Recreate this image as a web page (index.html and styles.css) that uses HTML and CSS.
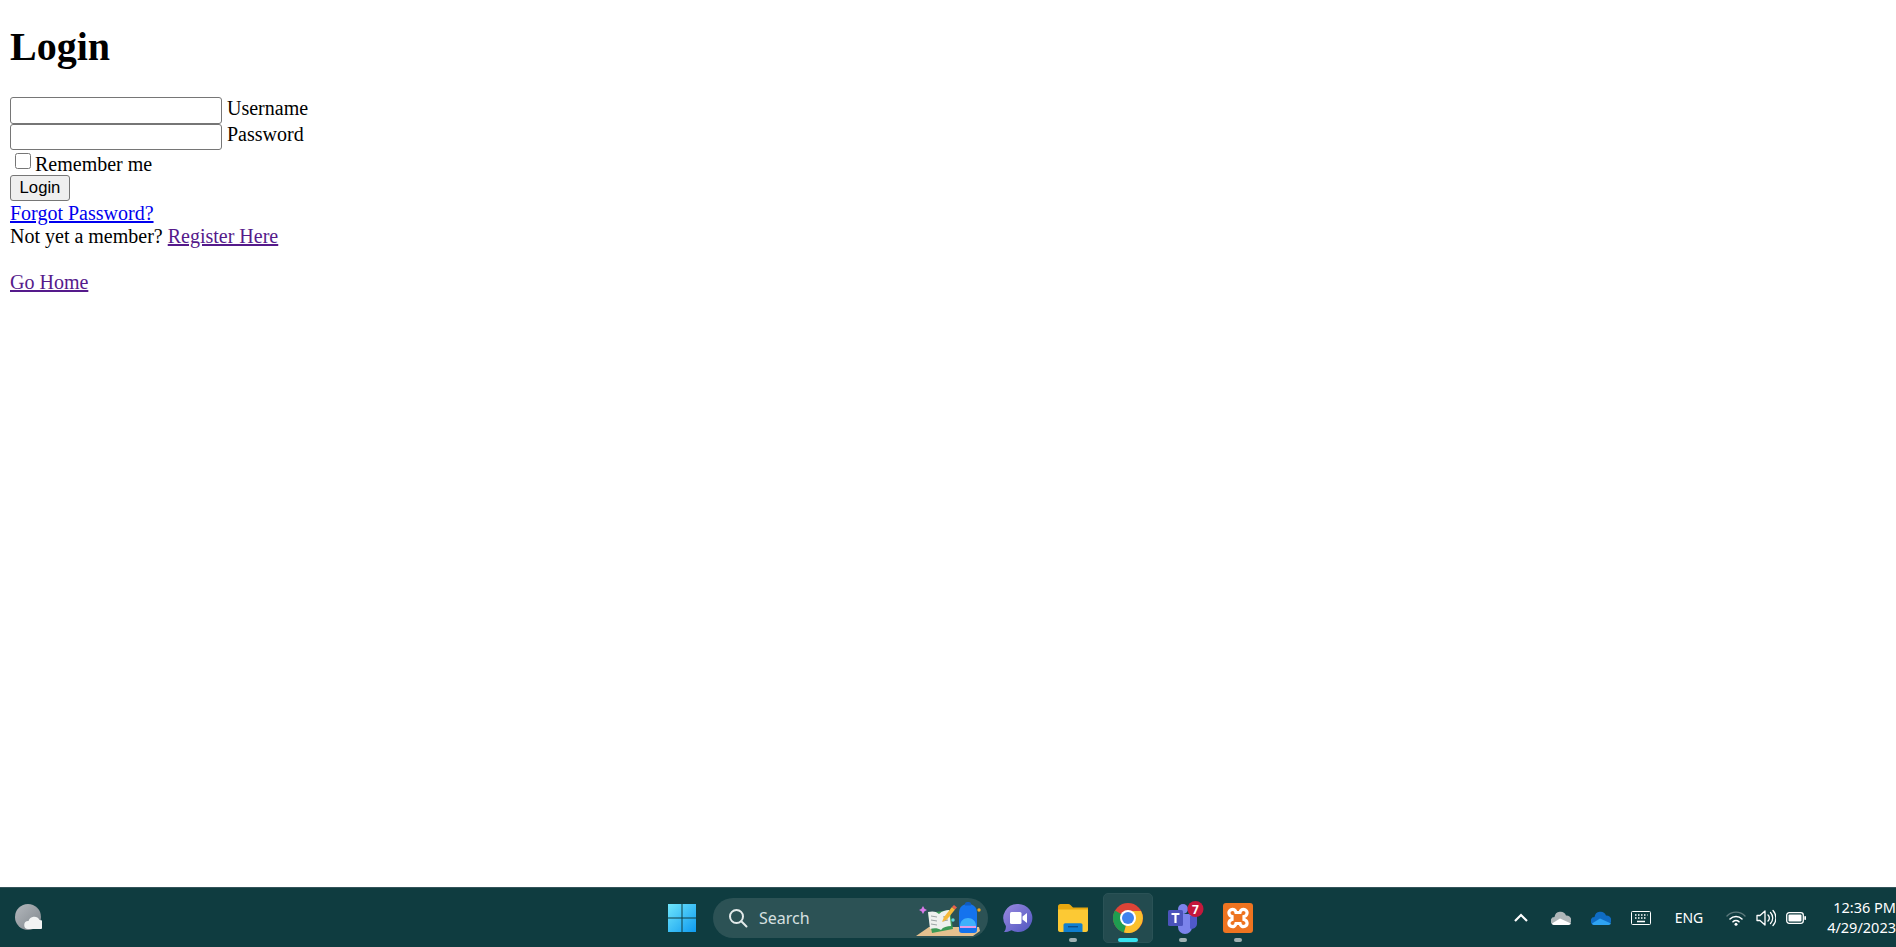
FILE: index.html
```html
<!DOCTYPE html>
<html lang="en">
<head>
<meta charset="utf-8">
<title>Login</title>
<link rel="stylesheet" href="styles.css">
</head>
<body>
<main class="page">
  <h1 class="title">Login</h1>
  <form class="form">
    <div class="row"><input class="field" type="text" aria-label="Username"> <label class="label">Username</label></div>
    <div class="row"><input class="field" type="password" aria-label="Password"> <label class="label">Password</label></div>
    <div class="row row-check"><input class="check" type="checkbox" id="rem"> <label class="label-check" for="rem">Remember me</label></div>
    <div class="row-btn"><button class="btn" type="button">Login</button></div>
    <div class="line"><a class="link" href="#forgot">Forgot Password?</a></div>
    <div class="line">Not yet a member? <a class="link visited" href="#reg">Register Here</a></div>
    <div class="line spaced"><a class="link visited" href="#home">Go Home</a></div>
  </form>
</main>
<footer class="taskbar">
  <div class="weather">
    <svg width="27" height="27" viewBox="0 0 27 27"><defs><linearGradient id="moon" x1="0" y1="0" x2="1" y2="1"><stop offset="0" stop-color="#b4b8bd"/><stop offset="1" stop-color="#7f868c"/></linearGradient></defs><circle cx="13" cy="13" r="13" fill="url(#moon)"/><path d="M13 25a4 4 0 0 1 .5-8 6 6 0 0 1 11-1 4.500 4.500 0 0 1 .5 9z" fill="#f2f3f3"/></svg>
  </div>
  <div class="center">
    <div class="tile">
      <svg width="30" height="30" viewBox="0 0 30 30"><defs><linearGradient id="win" x1="0" y1="0" x2="1" y2="1"><stop offset="0" stop-color="#6fe6fb"/><stop offset="1" stop-color="#0e9af0"/></linearGradient></defs><path fill="url(#win)" d="M1 1h13.500v13.500H1zM15.500 1H29v13.500H15.500zM1 15.500h13.500V29H1zM15.500 15.500H29V29H15.500z"/></svg>
    </div>
    <div class="search">
      <svg class="search-icon" width="20" height="20" viewBox="0 0 20 20" fill="none" stroke="#e3eaea" stroke-width="2"><circle cx="8.500" cy="8.500" r="6.500"/><path d="M13.300 13.300 18.500 18.500" stroke-linecap="round"/></svg>
      <span class="search-text">Search</span>
      <svg class="search-art" width="66" height="40" viewBox="0 0 66 40">
        <path d="M1 38 14 29h50l1 4-7 5z" fill="#e5c08f"/>
        <path d="M13 15 35 12l3 19-21 4z" fill="#3c9a56"/>
        <path d="M13 14c4-1 8-1 11 2 3-3 7-4 10-4l2 16c-4 0-8 1-10 4-3-2-7-2-11-1z" fill="#eef0ee"/>
        <path d="M16 18l6 1M16 22l6 1M16 26l6 1M28 19l5-1M28 23l5-1" stroke="#9aa3a3" stroke-width="1"/>
        <path d="M27 24l2-5 8-10 3 2.500-8 10z" fill="#f5b93a"/>
        <path d="M37 9l2-2 3 2.500-2 2z" fill="#e8604c"/>
        <path d="M44 15c0-6 4-9 9-9s9 3 9 9v17c0 2-1 3-3 3H47c-2 0-3-1-3-3z" fill="#1573ee"/>
        <path d="M50 5.500c0-2 6-2 6 0v2h-6z" fill="#0f5cc4"/>
        <path d="M45 28c0-5 3.500-8 8-8s8 3 8 8z" fill="#3fb0fb"/>
        <path d="M45 28h16v2H45z" fill="#e39be8"/>
        <path d="M8 8l1.500 2.700L12 12l-2.500 1.300L8 16l-1.500-2.700L4 12l2.500-1.300z" fill="#d77ae8"/>
        <circle cx="38" cy="22" r="1.700" fill="#62d4df"/>
        <circle cx="64" cy="12" r="1.700" fill="#f5a922"/>
      </svg>
    </div>
    <div class="tile">
      <svg width="30" height="30" viewBox="0 0 30 30"><defs><linearGradient id="meet" x1="0" y1="0" x2="1" y2="1"><stop offset="0" stop-color="#9a8ae0"/><stop offset="1" stop-color="#4f55c0"/></linearGradient></defs><path d="M15.500 1a14 14 0 1 1-7 26.200C6 28.500 3.500 29 1 29c1.500-1.500 2-3.500 1.900-6A14 14 0 0 1 15.500 1z" fill="url(#meet)"/><rect x="7" y="9" width="11.500" height="12" rx="1.500" fill="#fff"/><path d="M19.500 13.500 24 10v10l-4.500-3.500z" fill="#fff"/></svg>
    </div>
    <div class="tile">
      <svg width="30" height="28" viewBox="0 0 30 28"><path d="M0 2.500C0 1 1 0 2.500 0h7.700c1 0 1.600.4 2.300 1l2.500 2.500H30V8H0z" fill="#e8a80f"/><path d="M0 5.500h30V26c0 1-1 2-2 2H2c-1 0-2-1-2-2z" fill="#fcc934"/><path d="M5.500 21c0-1 .7-1.700 1.700-1.700h15.600c1 0 1.700.7 1.700 1.700v7h-19z" fill="#0f7fd0"/><path d="M10 22.700h10" stroke="#0b4f8a" stroke-width="1.400"/></svg>
      <span class="dot"></span>
    </div>
    <div class="tile tile-active">
      <svg width="30" height="30" viewBox="0 0 30 30"><circle cx="15" cy="15" r="15" fill="#dd4437"/><path d="M15 15 2 7.500A15 15 0 0 0 11 29.500z" fill="#1f9d50"/><path d="M15 8h13a15 15 0 0 1-17 21.500L15 15z" fill="#fbc02c"/><circle cx="15" cy="15" r="8" fill="#fff"/><circle cx="15" cy="15" r="6" fill="#3f82ee"/></svg>
      <span class="dot dot-active"></span>
    </div>
    <div class="tile">
      <svg width="42" height="34" viewBox="0 0 42 34"><circle cx="21" cy="8" r="5" fill="#7b83eb"/><path d="M16 13h14v13a7 7 0 0 1-14 0z" fill="#7b83eb"/><circle cx="30" cy="11" r="3.500" fill="#5059c9"/><path d="M28 15h7v8a5 5 0 0 1-7 4.500z" fill="#5059c9"/><rect x="6" y="9" width="15" height="16" rx="1.500" fill="#4b53bc"/><path d="M9.500 13h8M13.500 13v9" stroke="#fff" stroke-width="2.200" fill="none"/><circle cx="33.500" cy="8" r="8" fill="#c4183c"/><text class="badge" x="33.500" y="12.500" text-anchor="middle">7</text></svg>
      <span class="dot"></span>
    </div>
    <div class="tile">
      <svg width="30" height="30" viewBox="0 0 30 30"><rect width="30" height="30" rx="3" fill="#ee7420"/><path d="M7.500 7c3-1.500 5 0 5.500 2.500h4c.5-2.500 2.500-4 5.500-2.500 2.500 1.500 2 5.500-1.500 6.500v3c3.500 1 4 5 1.500 6.500-3 1.500-5 0-5.500-2.500h-4c-.5 2.500-2.500 4-5.500 2.500-2.500-1.500-2-5.500 1.500-6.500v-3C5.500 12.500 5 8.500 7.500 7z" fill="none" stroke="#fff" stroke-width="3.200"/></svg>
      <span class="dot"></span>
    </div>
  </div>
  <div class="tray">
    <div class="tray-item"><svg width="14" height="9" viewBox="0 0 14 9" fill="none" stroke="#fff" stroke-width="2.200"><path d="M1 8 7 2l6 6"/></svg></div>
    <div class="tray-item"><svg width="20" height="14" viewBox="0 0 20 14"><path d="M4 14a4 4 0 0 1-.5-8A6 6 0 0 1 15 4.500 4.700 4.700 0 0 1 16 14z" fill="#aeb6b8"/><path d="M1 12.500 9 7.500l11 5c-.5 1-2 1.500-4 1.500H4c-1.500 0-2.500-.5-3-1.500z" fill="#fff"/></svg></div>
    <div class="tray-item"><svg width="20" height="14" viewBox="0 0 20 14"><path d="M4 14a4 4 0 0 1-.5-8A6 6 0 0 1 15 4.500 4.700 4.700 0 0 1 16 14z" fill="#0f6cc4"/><path d="M1 12.500 9 7.500l11 5c-.5 1-2 1.500-4 1.500H4c-1.500 0-2.500-.5-3-1.500z" fill="#2ea3f2"/></svg></div>
    <div class="tray-item"><svg width="20" height="14" viewBox="0 0 20 14" fill="none" stroke="#fff"><rect x=".5" y=".5" width="19" height="13" rx="1"/><path d="M4 4h1.500M7 4h1.500M10 4h1.500M13 4h1.500M16 4h.5M4 7h1.500M7 7h1.500M10 7h1.500M13 7h1.500M6 10.500h8" stroke-width="1.300"/></svg></div>
    <div class="lang">ENG</div>
    <div class="tray-status"><svg width="20" height="16" viewBox="0 0 20 16" fill="none" stroke-linecap="round"><path d="M1 6a12.500 12.500 0 0 1 18 0" stroke="#5e7a7d" stroke-width="1.400"/><path d="M4 9a8.500 8.500 0 0 1 12 0M7 11.800a4.300 4.300 0 0 1 6 0" stroke="#fff" stroke-width="1.600"/><circle cx="10" cy="14.300" r="1.500" fill="#fff"/></svg></div>
    <div class="tray-status"><svg width="20" height="18" viewBox="0 0 20 18" fill="none" stroke="#fff" stroke-width="1.300"><path d="M1 6.500h3L9 2v14l-5-4.500H1z" stroke-linejoin="round"/><path d="M12 6a4 4 0 0 1 0 6M14.500 3.500a8 8 0 0 1 0 11M17 1.500a11 11 0 0 1 0 15" stroke-linecap="round"/></svg></div>
    <div class="tray-status"><svg width="20" height="12" viewBox="0 0 20 12"><rect x=".7" y=".7" width="16.600" height="10.600" rx="2.500" fill="none" stroke="#fff" stroke-width="1.300"/><rect x="2.500" y="2.500" width="13" height="7" rx="1" fill="#fff"/><rect x="18.300" y="4" width="1.700" height="4" rx=".7" fill="#fff"/></svg></div>
    <div class="clock"><span>12:36 PM</span><span>4/29/2023</span></div>
  </div>
</footer>
</body>
</html>
```
FILE: styles.css
```css
html, body { margin: 0; padding: 0; height: 100%; }
body {
  display: flex;
  flex-direction: column;
  height: 947px;
  overflow: hidden;
  background: #fff;
  color: #000;
  font-family: "Liberation Serif", "Times New Roman", serif;
  font-size: 20px;
}
.page { flex: 1; padding: 0 10px; }
.title { font-size: 40px; line-height: 46px; margin: 24px 0 27px; font-weight: bold; }
.row { height: 26.500px; display: flex; align-items: center; gap: 5px; }
.label { padding-bottom: 4px; }
.field {
  width: 212px; height: 26.500px; box-sizing: border-box; margin: 0; padding: 1px 2px;
  border: 1px solid #767676; border-radius: 3px; background: #fff;
}
.row-check { height: 25px; padding-left: 5px; gap: 4px; }
.label-check { padding-top: 3px; }
.check { width: 16px; height: 16px; margin: 0 0 3px; }
.row-btn { height: 26.500px; }
.btn {
  display: block; width: 60px; height: 26px; margin: 0; padding: 0; box-sizing: border-box;
  font: 16.670px "Liberation Sans", Arial, sans-serif; color: #000;
  background: #efefef; border: 1px solid #767676; border-radius: 3px;
}
.line { line-height: 23px; }
.spaced { margin-top: 23px; }
.link { color: #00e; text-decoration: underline; }
.visited { color: #551a8b; }

.taskbar {
  flex: 0 0 60px; height: 60px; box-sizing: border-box;
  display: flex; align-items: center;
  background: #0f3c40; border-top: 1px solid #34545a;
  color: #fff; font-family: "Noto Sans", "Open Sans", sans-serif;
}
.weather { flex: 0 0 657px; box-sizing: border-box; padding-left: 15px; display: flex; align-items: center; }
.center { display: flex; align-items: center; gap: 5px; }
.tile {
  position: relative; width: 50px; height: 50px; display: flex;
  align-items: center; justify-content: center; border-radius: 5px;
  border: 1px solid transparent; box-sizing: border-box;
}
.tile-active { background: #234b4f; border-color: #2a5256; }
.dot { position: absolute; left: 20px; bottom: 0; width: 8px; height: 4px; border-radius: 2px; background: #9fb0b2; }
.dot-active { left: 14px; width: 20px; background: #36e3f0; }
.search {
  width: 275px; height: 40px; margin: 0 0 0 1px; box-sizing: border-box; border-radius: 20px;
  background: #2c5255; display: flex; align-items: center; padding-left: 15px; padding-right: 7px;
}
.search-icon { flex: none; }
.search-text { margin-left: 11px; font-size: 16px; color: #d6e0e0; }
.search-art { margin-left: auto; }
.badge { font: bold 12px "Noto Sans", sans-serif; fill: #fff; }
.tray { margin-left: auto; display: flex; align-items: center; }
.tray-item { width: 40px; display: flex; justify-content: center; }
.lang { width: 56px; margin-right: 4px; font-size: 14px; text-align: center; }
.tray-status { width: 30px; display: flex; justify-content: center; }
.clock {
  width: 85px; display: flex; flex-direction: column; align-items: flex-end;
  margin-top: -2px; font-size: 14.500px; line-height: 20px; white-space: nowrap;
}
```
